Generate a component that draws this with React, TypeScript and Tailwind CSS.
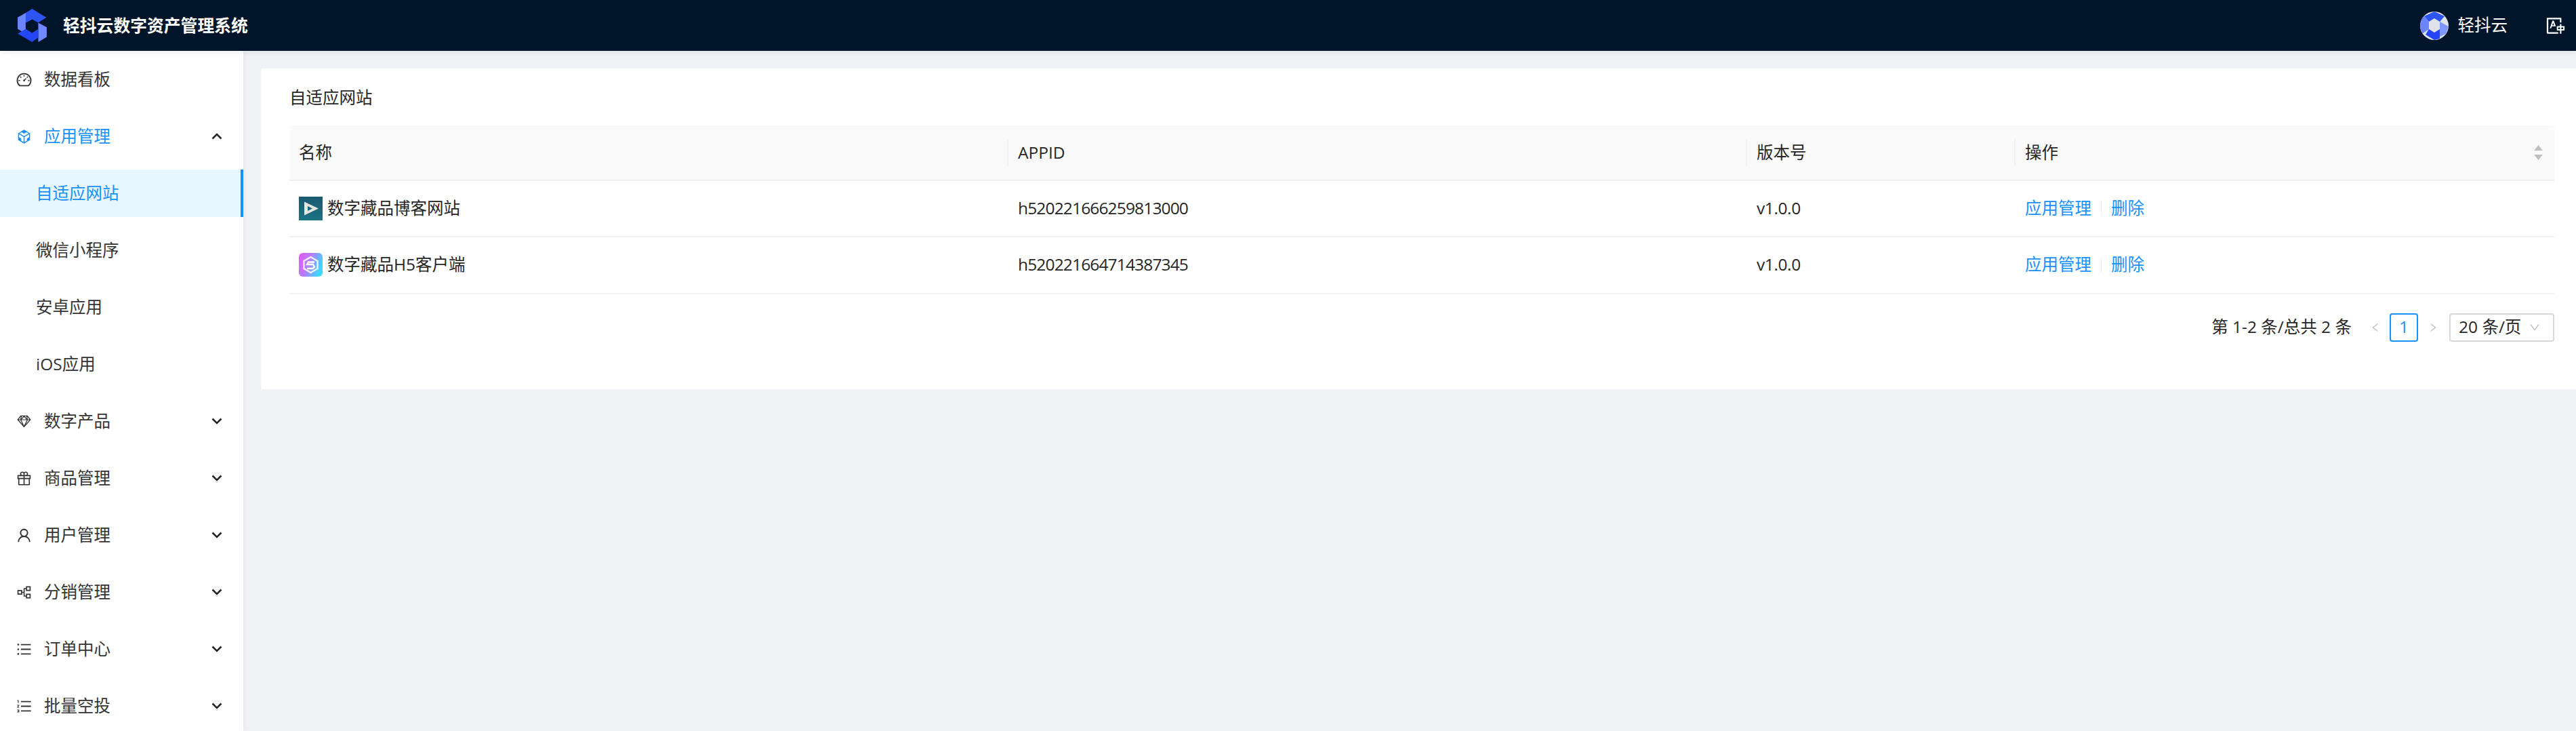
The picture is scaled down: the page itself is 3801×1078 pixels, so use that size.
import React from "react";
import {
  AiOutlineDashboard,
  AiOutlineCodeSandbox,
  AiOutlineSketch,
  AiOutlineGift,
  AiOutlineUser,
  AiOutlinePartition,
  AiOutlineUnorderedList,
  AiOutlineOrderedList,
  AiOutlineTranslation,
  AiOutlineLeft,
  AiOutlineRight,
  AiOutlineDown,
} from "react-icons/ai";

const Logo = ({ className }: { className?: string }) => (
  <svg viewBox="80 27 127 145" className={className}>
    <polygon points="115,45 80,65 80,115 115,135 115,88 143,72" fill="#6b84ff" />
    <polygon points="115,45 143,27 205,65 170,88 143,72 115,88" fill="#2f54f5" />
    <polygon points="170,88 207,108 207,150 170,172 170,117" fill="#7089ff" />
    <polygon points="80,135 115,115 143,132 170,115 170,152 143,172" fill="#2347f7" />
  </svg>
);

const Chevron = ({ up }: { up?: boolean }) => (
  <svg viewBox="0 0 16 10" className="h-[10px] w-4 text-[#262626]" fill="none" stroke="currentColor" strokeWidth="2.6">
    <path d={up ? "M1.5 8.5 8 2l6.5 6.5" : "M1.5 1.5 8 8l6.5-6.5"} />
  </svg>
);

const topItems = [
  { icon: AiOutlineSketch, label: "数字产品" },
  { icon: AiOutlineGift, label: "商品管理" },
  { icon: AiOutlineUser, label: "用户管理" },
  { icon: AiOutlinePartition, label: "分销管理" },
  { icon: AiOutlineUnorderedList, label: "订单中心" },
  { icon: AiOutlineOrderedList, label: "批量空投" },
];

const MenuRow = ({
  icon: Icon,
  label,
  active,
  chevron,
}: {
  icon: React.ComponentType<{ className?: string }>;
  label: string;
  active?: boolean;
  chevron?: "up" | "down";
}) => (
  <div className={`flex h-[70px] shrink-0 items-center pl-[23px] pr-[31px] ${active ? "text-[#1890ff]" : "text-[#333]"}`}>
    <Icon className="h-[25px] w-[25px] shrink-0" />
    <span className="ml-[17px] flex-1">{label}</span>
    {chevron && <Chevron up={chevron === "up"} />}
  </div>
);

const SubRow = ({ label, active }: { label: string; active?: boolean }) => (
  <div
    className={`flex h-[70px] shrink-0 items-center pl-[53px] ${
      active ? "border-r-4 border-[#1890ff] bg-[#e6f7ff] text-[#1890ff]" : "text-[#333]"
    }`}
  >
    {label}
  </div>
);

const HeadCell = ({ children, first }: { children: React.ReactNode; first?: boolean }) => (
  <div className="flex items-center">
    {!first && <span className="h-10 w-[2px] shrink-0 bg-[#f0f0f0]" />}
    <span className={first ? "ml-[14px]" : "ml-[14px]"}>{children}</span>
  </div>
);

const PlayIcon = () => (
  <svg viewBox="0 0 35 35" className="h-[35px] w-[35px] shrink-0">
    <defs>
      <linearGradient id="tealBg" x1="0" y1="0" x2="0" y2="1">
        <stop offset="0" stopColor="#1a5a70" />
        <stop offset="1" stopColor="#1b7285" />
      </linearGradient>
    </defs>
    <rect width="35" height="35" fill="url(#tealBg)" />
    <polygon points="9,27 29,20 18,24" fill="#134e5e" />
    <path d="M8 7.5 29 17.5 8 27.5Z M13 14v7l7-3.5Z" fill="#e4e6df" fillRule="evenodd" />
  </svg>
);

const HexIcon = () => (
  <svg viewBox="0 0 35 35" className="h-[35px] w-[35px] shrink-0 rounded-[6px]">
    <defs>
      <linearGradient id="pinkBlue" x1="0" y1="0" x2="1" y2="0.4">
        <stop offset="0" stopColor="#e455fb" />
        <stop offset="0.5" stopColor="#b67dfb" />
        <stop offset="1" stopColor="#3fd7ff" />
      </linearGradient>
    </defs>
    <rect width="35" height="35" fill="url(#pinkBlue)" />
    <polygon points="17.5,6 27.5,12 27.5,23 17.5,29 7.5,23 7.5,12" fill="none" stroke="#fff" strokeWidth="2.4" opacity="0.85" />
    <path d="M23 13.5 H14 L12 17 H21 L23 20.5 L20.5 23 H12" fill="none" stroke="#fff" strokeWidth="2.4" />
  </svg>
);

const rows = [
  { icon: <PlayIcon />, name: "数字藏品博客网站", appid: "h520221666259813000", h: "h-[82.5px]" },
  { icon: <HexIcon />, name: "数字藏品H5客户端", appid: "h520221664714387345", h: "h-[84px]" },
];

export default function App() {
  return (
    <div
      className="flex h-screen w-full flex-col overflow-hidden bg-[#f0f2f5] text-[24.5px] leading-[1.5] text-[#262626]"
      style={{ fontFamily: '"Open Sans","Noto Sans CJK SC",sans-serif' }}
    >
      <header className="z-10 flex h-[75px] shrink-0 items-center bg-[#001529] pl-[26px] pr-[15px] text-white shadow-[0_2px_8px_rgba(0,21,41,0.08)]">
        <Logo className="h-[49px] w-[43px] shrink-0" />
        <span className="ml-[24px] flex-1 text-[24.8px] font-bold">轻抖云数字资产管理系统</span>
        <svg viewBox="0 0 42 42" className="h-[42px] w-[42px] shrink-0 rounded-full">
          <rect width="42" height="42" fill="#dfe2e8" />
          <polygon points="21,0 36,7 29,15 21,10 13,15 6,7" fill="#2f54f5" />
          <polygon points="0,14 6,7 13,15 13,26 3,33 0,26" fill="#6b84ff" />
          <polygon points="29,15 42,22 38,33 29,37" fill="#8096ff" />
          <polygon points="8,34 13,26 21,31 29,26 29,40 21,42" fill="#2347f7" />
        </svg>
        <span className="ml-[14px]">轻抖云</span>
        <AiOutlineTranslation className="ml-[56px] h-[30px] w-[30px] shrink-0" />
      </header>

      <div className="flex min-h-0 flex-1">
        <aside className="flex w-[359px] shrink-0 flex-col gap-[14px] overflow-hidden bg-white pt-[7px] shadow-[2px_0_8px_rgba(29,35,41,0.05)]">
          <MenuRow icon={AiOutlineDashboard} label="数据看板" />
          <MenuRow icon={AiOutlineCodeSandbox} label="应用管理" active chevron="up" />
          <SubRow label="自适应网站" active />
          <SubRow label="微信小程序" />
          <SubRow label="安卓应用" />
          <SubRow label="iOS应用" />
          {topItems.map((item) => (
            <MenuRow key={item.label} icon={item.icon} label={item.label} chevron="down" />
          ))}
        </aside>

        <main className="min-w-0 flex-1 pl-[26px] pt-[26px]">
          <section className="h-[473px] rounded-l-[3px] bg-white px-[32px] pl-[42px] pr-[32px]">
            <div className="flex h-[84px] items-center pt-[3px]">自适应网站</div>

            <div className="grid h-[82px] grid-cols-[1059px_1090px_396px_1fr] rounded-t-[3px] border-b-2 border-[#f0f0f0] bg-[#fafafa]">
              <HeadCell first>名称</HeadCell>
              <HeadCell>APPID</HeadCell>
              <HeadCell>版本号</HeadCell>
              <div className="flex items-center justify-between pr-[17px]">
                <HeadCell>操作</HeadCell>
                <svg viewBox="0 0 13 22" className="h-[22px] w-[13px] text-[#bfbfbf]" fill="currentColor">
                  <path d="M6.5 0 13 8H0Z M0 14H13L6.5 22Z" />
                </svg>
              </div>
            </div>

            {rows.map((r) => (
              <div key={r.appid} className={`grid grid-cols-[1059px_1090px_396px_1fr] border-b-2 border-[#f0f0f0] ${r.h}`}>
                <div className="flex items-center gap-[7px] pl-[14px]">
                  {r.icon}
                  <span>{r.name}</span>
                </div>
                <div className="flex items-center pl-[16px] tracking-[-0.85px]">{r.appid}</div>
                <div className="flex items-center pl-[16px] tracking-[-0.4px]">v1.0.0</div>
                <div className="flex items-center pl-[16px] text-[#1890ff]">
                  <span>应用管理</span>
                  <span className="mx-[14px] h-[22px] w-px bg-[#f0f0f0]" />
                  <span>删除</span>
                </div>
              </div>
            ))}

            <div className="mt-[28px] flex h-[42px] items-center justify-end">
              <span>第 1-2 条/总共 2 条</span>
              <AiOutlineLeft className="ml-[27px] h-[16px] w-[16px] text-[#bfbfbf]" />
              <span className="ml-[13px] flex h-[42px] w-[42px] items-center justify-center rounded-[4px] border-2 border-[#1890ff] text-[#1890ff]">
                1
              </span>
              <AiOutlineRight className="ml-[14px] h-[16px] w-[16px] text-[#bfbfbf]" />
              <span className="ml-[16px] flex h-[42px] w-[155px] items-center rounded-[4px] border-2 border-[#d9d9d9] pl-[12px]">
                <span className="flex-1 whitespace-nowrap">20 条/页</span>
                <AiOutlineDown className="mr-[18px] h-[18px] w-[18px] text-[#bfbfbf]" />
              </span>
            </div>
          </section>
        </main>
      </div>
    </div>
  );
}
